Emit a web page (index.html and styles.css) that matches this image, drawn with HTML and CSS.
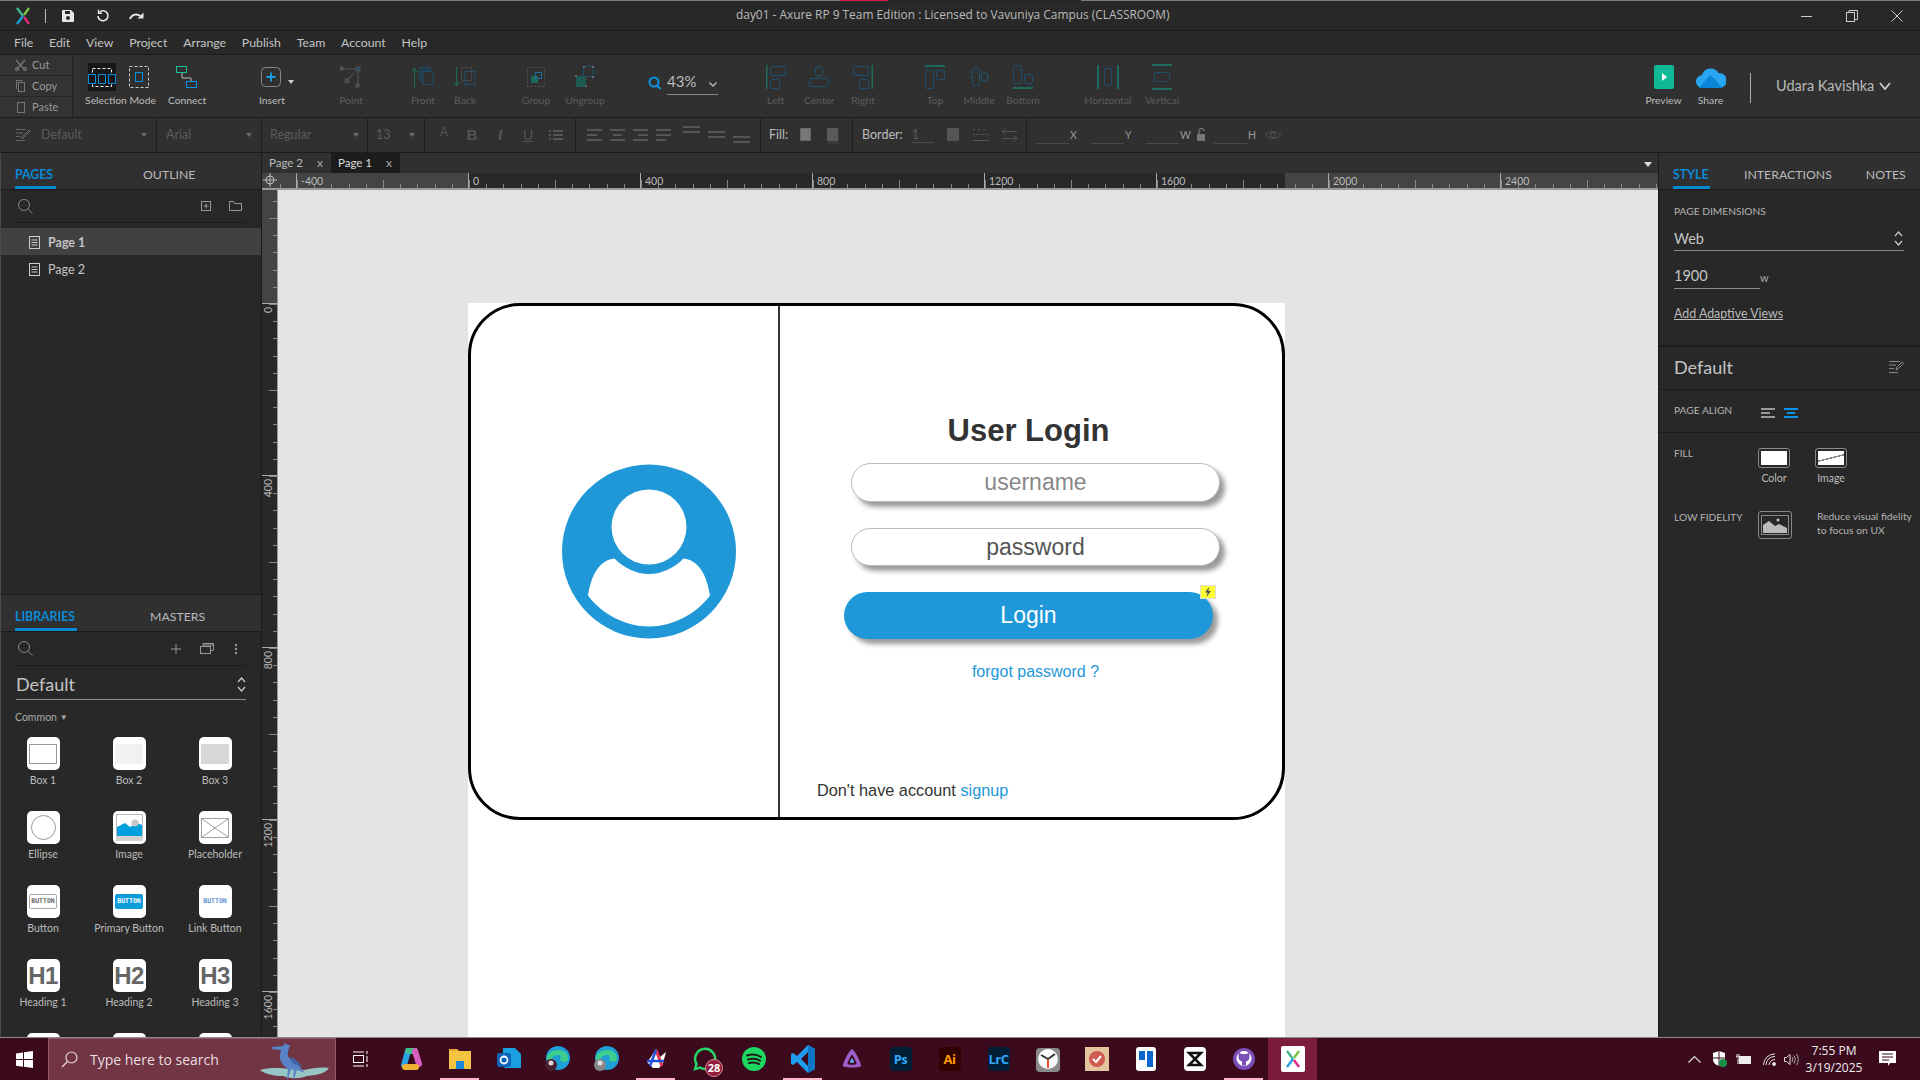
FILE: index.html
```html
<!DOCTYPE html>
<html lang="en">
<head>
<meta charset="utf-8">
<title>day01 - Axure RP 9</title>
<link rel="stylesheet" href="styles.css">
</head>
<body>
<div class="app">
  <div class="strip"><i class="s-a"></i><i class="s-b"></i><i class="s-c"></i><i class="s-d"></i></div>
  <header class="titlebar">
    <div class="tb-left">
      <svg class="logo" width="14" height="18" viewBox="0 0 14 18" fill="none" stroke-width="2.4"><path d="M1 1 L7 9" stroke="#3fb58f"/><path d="M7 9 L1 17" stroke="#1a9fdc"/><path d="M13 1 L8 8" stroke="#7fc241"/><path d="M8 10 L13 17" stroke="#e0287c"/></svg>
      <span class="tb-sep"></span>
      <svg width="14" height="14" viewBox="0 0 14 14"><path d="M1 2a1 1 0 0 1 1-1h8l3 3v8a1 1 0 0 1-1 1H2a1 1 0 0 1-1-1z" fill="#e6e6e6"/><rect x="4" y="2" width="5" height="3" fill="#282828"/><circle cx="7" cy="9" r="2" fill="#282828"/></svg>
      <svg class="ml21" width="14" height="14" viewBox="0 0 14 14" fill="none" stroke="#e6e6e6" stroke-width="1.6"><path d="M3.5 3.2A5 5 0 1 1 2 7"/><path d="M2.5 0.8v3.4h3.4" stroke-width="1.4"/></svg>
      <svg class="ml19" width="16" height="12" viewBox="0 0 16 12" fill="none" stroke="#e6e6e6" stroke-width="2"><path d="M1 9c2-5 7-6 12-2"/><path d="M14.5 2.5v6h-6" fill="#e6e6e6" stroke="none"/></svg>
    </div>
    <div class="tb-title">day01 - Axure RP 9 Team Edition : Licensed to Vavuniya Campus (CLASSROOM)</div>
    <div class="winctl">
      <svg width="12" height="12" viewBox="0 0 12 12" stroke="#ccc" fill="none"><path d="M0 6.5h11"/></svg>
      <svg width="12" height="12" viewBox="0 0 12 12" stroke="#ccc" fill="none"><rect x="0.5" y="2.5" width="8" height="9"/><path d="M3 2.5V.5h8.5v9h-3"/></svg>
      <svg width="12" height="12" viewBox="0 0 12 12" stroke="#ccc" fill="none"><path d="M.5.5l11 11M11.5.5l-11 11"/></svg>
    </div>
  </header>
  <nav class="menubar">
    <span>File</span><span>Edit</span><span>View</span><span>Project</span><span>Arrange</span><span>Publish</span><span>Team</span><span>Account</span><span>Help</span>
  </nav>
  <section class="toolbar">
    <div class="clip">
      <div class="clip-row"><svg width="12" height="12" viewBox="0 0 12 12" fill="none" stroke="#777" stroke-width="1.2"><path d="M1 1l8 9M10 1L2 10"/><circle cx="2" cy="10" r="1.4"/><circle cx="10" cy="10" r="1.4"/></svg><span>Cut</span></div>
      <div class="clip-row"><svg width="12" height="12" viewBox="0 0 12 12" fill="none" stroke="#777"><rect x="3.5" y="2.5" width="6" height="9"/><path d="M1.5 9V.5h6"/></svg><span>Copy</span></div>
      <div class="clip-row"><svg width="12" height="12" viewBox="0 0 12 12" fill="none" stroke="#777"><rect x="2.5" y="1.5" width="7" height="10"/><path d="M4.5 1.5h3"/></svg><span>Paste</span></div>
    </div>
    <div class="tool w81">
      <div class="tool-ic sel-ic">
        <svg class="sel-on" width="28" height="28" viewBox="0 0 28 28" fill="none"><rect width="28" height="28" fill="#171717"/><rect x="4.5" y="5.5" width="19" height="18" stroke="#eee" stroke-dasharray="3 2"/><path d="M.5 11.5h7v9h-7zM10.5 11.5h7v9h-7zM20.5 11.5h7v9h-7z" stroke="#0a93e6" fill="#171717"/></svg>
        <svg width="20" height="24" viewBox="0 0 20 24" fill="none"><rect x=".5" y="1.5" width="19" height="21" stroke="#ccc" stroke-dasharray="3 2"/><rect x="6.5" y="7.5" width="7" height="9" stroke="#0a93e6"/></svg>
      </div>
      <span class="tool-l on">Selection Mode</span>
    </div>
    <div class="tool w52">
      <div class="tool-ic"><svg width="22" height="22" viewBox="0 0 22 22" fill="none"><rect x=".5" y=".5" width="10" height="6" stroke="#19c29a"/><rect x="10.5" y="15.5" width="10" height="6" stroke="#0a93e6"/><path d="M6 7v5h9v3" stroke="#bbb"/></svg></div>
      <span class="tool-l on">Connect</span>
    </div>
    <div class="tool w118">
      <div class="tool-ic"><svg class="ins-ic" width="20" height="24" viewBox="0 0 20 24" fill="none"><rect x=".5" y="2.5" width="19" height="19" rx="4" stroke="#888"/><path d="M10 7.5v9M5.5 12h9" stroke="#1a9fe8" stroke-width="1.8"/></svg><i class="caret ins-caret"></i></div>
      <span class="tool-l on">Insert</span>
    </div>
    <div class="tool w40">
      <div class="tool-ic"><svg width="22" height="24" viewBox="0 0 22 24" fill="none" stroke="#555"><path d="M2 4h16v16" /><rect x="0" y="2" width="3" height="3" fill="#555"/><rect x="16" y="2" width="4" height="4" fill="#1f4d6b"/><rect x="16" y="19" width="3" height="3" fill="#555"/><path d="M14 8L7 15l-1-2-1 5 5-1-2-1" fill="#4a4a4a"/></svg></div>
      <span class="tool-l">Point</span>
    </div>
    <div class="tool w42 ml31">
      <div class="tool-ic"><svg width="22" height="22" viewBox="0 0 22 22" fill="none"><path d="M2.500 21V3M0 6l2.500-4L5 6" stroke="#1c6a5c"/><rect x="8" y="1.500" width="10" height="13" stroke="#1f4d6b" fill="#233c4b"/><rect x="11" y="5.500" width="10" height="13" stroke="#1f4d6b" fill="#303030"/></svg></div>
      <span class="tool-l">Front</span>
    </div>
    <div class="tool w42">
      <div class="tool-ic"><svg width="22" height="22" viewBox="0 0 22 22" fill="none"><path d="M2.500 1v18M0 16l2.500 4L5 16" stroke="#1c6a5c"/><rect x="7.500" y="1.500" width="10" height="13" stroke="#444"/><rect x="11" y="5.500" width="10" height="13" stroke="#1f4d6b"/></svg></div>
      <span class="tool-l">Back</span>
    </div>
    <div class="tool w49 ml25">
      <div class="tool-ic"><svg width="20" height="22" viewBox="0 0 20 22" fill="none"><rect x="1.500" y="1.500" width="17" height="19" stroke="#555" stroke-dasharray="2 2"/><rect x="5" y="10" width="7" height="7" fill="#1c6a5c"/><rect x="9.500" y="6.500" width="6" height="6" stroke="#1f6da0"/></svg></div>
      <span class="tool-l">Group</span>
    </div>
    <div class="tool w49">
      <div class="tool-ic"><svg width="20" height="22" viewBox="0 0 20 22" fill="none"><rect x="8.500" y=".5" width="10" height="10" stroke="#1f4d6b"/><rect x="1" y="10" width="10" height="11" fill="#1c5a52"/><path d="M8 0h2v2H8zM17 0h2v2h-2zM17 10h2v2h-2zM0 9h2v2H0zM10 19h2v2h-2z" fill="#666"/></svg></div>
      <span class="tool-l">Ungroup</span>
    </div>
    <div class="zoomctl">
      <svg width="14" height="16" viewBox="0 0 14 16" fill="none" stroke="#0a93e6" stroke-width="2"><circle cx="6" cy="7" r="4.500"/><path d="M9 10.500l3.500 3.500"/></svg>
      <div class="zoom-field"><span>43%</span><svg width="8" height="5" viewBox="0 0 8 5" fill="none" stroke="#bbb" stroke-width="1.300"><path d="M.5.5L4 4 7.500.5"/></svg></div>
    </div>
    <div class="tool w43 ml36">
      <div class="tool-ic"><svg width="20" height="24" viewBox="0 0 20 24" fill="none"><path d="M.500 0v24" stroke="#1c6a5c" stroke-width="2"/><rect x="4.500" y="1.500" width="15" height="9" rx="1.500" stroke="#1f4d6b"/><rect x="4.500" y="14.500" width="9" height="9" rx="1.500" stroke="#1f4d6b"/></svg></div>
      <span class="tool-l">Left</span>
    </div>
    <div class="tool w43">
      <div class="tool-ic"><svg width="20" height="24" viewBox="0 0 20 24" fill="none" stroke="#1f4d6b"><path d="M10 0v24" stroke="#1c5a52"/><rect x="6.500" y="2.500" width="7" height="8" rx="1.500" fill="#303030"/><rect x=".5" y="13.500" width="19" height="8" rx="1.500" fill="#303030"/></svg></div>
      <span class="tool-l">Center</span>
    </div>
    <div class="tool w44">
      <div class="tool-ic"><svg width="20" height="24" viewBox="0 0 20 24" fill="none"><path d="M19.500 0v24" stroke="#1c6a5c" stroke-width="2"/><rect x=".5" y="1.500" width="15" height="9" rx="1.500" stroke="#1f4d6b"/><rect x="6.500" y="14.500" width="9" height="9" rx="1.500" stroke="#1f4d6b"/></svg></div>
      <span class="tool-l">Right</span>
    </div>
    <div class="tool w44 ml28">
      <div class="tool-ic"><svg width="20" height="24" viewBox="0 0 20 24" fill="none"><path d="M0 1h20" stroke="#1c6a5c" stroke-width="2"/><rect x=".5" y="5.500" width="8" height="18" rx="1.500" stroke="#1f4d6b"/><rect x="11.500" y="5.500" width="8" height="9" rx="1.500" stroke="#1f4d6b"/></svg></div>
      <span class="tool-l">Top</span>
    </div>
    <div class="tool w44">
      <div class="tool-ic"><svg width="20" height="24" viewBox="0 0 20 24" fill="none" stroke="#1f4d6b"><path d="M0 12h20" stroke="#1c5a52"/><rect x="3.500" y="3.500" width="7" height="17" rx="1.500" fill="#303030"/><rect x="12.500" y="7.500" width="6" height="8" rx="1.500" fill="#303030"/></svg></div>
      <span class="tool-l">Middle</span>
    </div>
    <div class="tool w44">
      <div class="tool-ic"><svg width="20" height="24" viewBox="0 0 20 24" fill="none"><path d="M0 23h20" stroke="#1c6a5c" stroke-width="2"/><rect x=".5" y=".5" width="8" height="18" rx="1.500" stroke="#1f4d6b"/><rect x="11.500" y="9.500" width="8" height="9" rx="1.500" stroke="#1f4d6b"/></svg></div>
      <span class="tool-l">Bottom</span>
    </div>
    <div class="tool w54 ml36">
      <div class="tool-ic"><svg width="22" height="24" viewBox="0 0 22 24" fill="none"><path d="M1 0v24M21 0v24" stroke="#1c6a5c" stroke-width="2"/><rect x="7.500" y="3.500" width="7" height="17" rx="1" stroke="#1f4d6b"/></svg></div>
      <span class="tool-l">Horizontal</span>
    </div>
    <div class="tool w54">
      <div class="tool-ic"><svg width="20" height="26" viewBox="0 0 20 26" fill="none"><path d="M0 1h20M0 25h20" stroke="#1c6a5c" stroke-width="2"/><rect x="2.500" y="8.500" width="15" height="9" rx="1" stroke="#1f4d6b"/></svg></div>
      <span class="tool-l">Vertical</span>
    </div>
    <div class="tool w47 push">
      <div class="tool-ic"><svg width="20" height="24" viewBox="0 0 20 24"><rect width="20" height="24" rx="2" fill="#10b995"/><path d="M8 8l5 4-5 4z" fill="#fff"/></svg></div>
      <span class="tool-l on">Preview</span>
    </div>
    <div class="tool w47">
      <div class="tool-ic"><svg width="30" height="24" viewBox="0 0 30 24"><path d="M7 23a6.500 6.500 0 0 1-1-13 9 9 0 0 1 16.500-2A7.500 7.500 0 0 1 24 23z" fill="#28a7f0"/><path d="M3 23L14 10l5 4 7 9z" fill="#0a84d6"/></svg></div>
      <span class="tool-l on">Share</span>
    </div>
    <span class="user-sep"></span>
    <div class="user"><span>Udara Kavishka</span><svg width="12" height="8" viewBox="0 0 12 8" fill="none" stroke="#ccc" stroke-width="1.800"><path d="M1 1l5 6 5-6"/></svg></div>
  </section>
  <section class="formatbar">
    <div class="fsec f1"><svg width="14" height="14" viewBox="0 0 14 14" fill="none" stroke="#666"><path d="M0 1.500h10M0 5h7M0 8.500h5M0 12.500h9M6 11l1-3 6-6 1 1-6 6z"/></svg><span class="dim ml11">Default</span><i class="caret dimc"></i></div>
    <div class="fsec f2"><span class="dim">Arial</span><i class="caret dimc"></i></div>
    <div class="fsec f3"><span class="dim">Regular</span><i class="caret dimc"></i></div>
    <div class="fsec f4"><span class="dim">13</span><i class="caret dimc"></i></div>
    <div class="fsec f5">
      <span class="fmt fa">A</span><span class="fmt fb">B</span><span class="fmt fi">I</span><span class="fmt fu">U</span>
      <span class="fmt"><svg width="14" height="12" viewBox="0 0 14 12" fill="#555"><path d="M0 1h2v2H0zM0 5h2v2H0zM0 9h2v2H0zM4 1h10v2H4zM4 5h10v2H4zM4 9h10v2H4z"/></svg></span>
    </div>
    <div class="fsec f6">
      <svg width="15" height="12" viewBox="0 0 15 12" fill="#555"><path d="M0 0h15v2H0zM0 5h10v2H0zM0 10h15v2H0z"/></svg>
      <svg width="15" height="12" viewBox="0 0 15 12" fill="#555"><path d="M0 0h15v2H0zM3 5h9v2H3zM0 10h15v2H0z"/></svg>
      <svg width="15" height="12" viewBox="0 0 15 12" fill="#555"><path d="M0 0h15v2H0zM5 5h10v2H5zM0 10h15v2H0z"/></svg>
      <svg width="15" height="12" viewBox="0 0 15 12" fill="#555"><path d="M0 0h15v2H0zM0 5h15v2H0zM0 10h10v2H0z"/></svg>
      <svg class="ml6" width="17" height="18" viewBox="0 0 17 18" fill="#555"><path d="M0 0h17v2H0zM0 5h17v2H0z"/></svg>
      <svg width="17" height="18" viewBox="0 0 17 18" fill="#555"><path d="M0 5h17v2H0zM0 10h17v2H0z"/></svg>
      <svg width="17" height="18" viewBox="0 0 17 18" fill="#555"><path d="M0 10h17v2H0zM0 15h17v2H0z"/></svg>
    </div>
    <div class="fsec f7"><span class="lit">Fill:</span><i class="sw sw1"></i><i class="sw sw2"></i></div>
    <div class="fsec f8"><span class="lit">Border:</span><span class="bw">1</span><i class="sw sw3"></i>
      <svg class="ml14" width="16" height="14" viewBox="0 0 16 14" stroke="#555" fill="none"><path d="M0 1.500h3M5 1.500h3M10 1.500h3M0 6.500h16" stroke-dasharray="2 1"/><path d="M0 12.500h16"/></svg>
      <svg class="ml13" width="15" height="14" viewBox="0 0 15 14" stroke="#555" fill="none"><path d="M0 3.500h15M3 .5L0 3.500l3 3M0 10.500h15M12 7.500l3 3-3 3"/></svg>
    </div>
    <div class="fsec f9">
      <i class="fld"></i><span class="fl">X</span><i class="fld"></i><span class="fl">Y</span><i class="fld"></i><span class="fl">W</span>
      <svg class="lock" width="10" height="13" viewBox="0 0 10 13"><rect y="6" width="8" height="7" fill="#777"/><path d="M2 6V3a2.500 2.500 0 0 1 5 0" fill="none" stroke="#777" stroke-width="1.200"/></svg>
      <i class="fld"></i><span class="fl">H</span>
      <svg class="eye" width="16" height="12" viewBox="0 0 16 12" fill="none" stroke="#555"><path d="M.5 6C3 1.500 13 1.500 15.500 6 13 10.500 3 10.500.5 6z"/><circle cx="8" cy="6" r="2.500"/></svg>
    </div>
  </section>
  <main class="main">
    <aside class="leftp">
      <div class="pages">
        <div class="ptabs"><span class="ptab on">PAGES</span><span class="ptab outline">OUTLINE</span></div>
        <div class="srow">
          <svg width="15" height="15" viewBox="0 0 15 15" fill="none" stroke="#888"><circle cx="6" cy="6" r="5.500"/><path d="M10 10l4.500 4.500"/></svg>
          <svg class="push" width="10" height="10" viewBox="0 0 10 10" fill="none" stroke="#999"><rect x=".5" y=".5" width="9" height="9"/><path d="M5 2.500v5M2.500 5h5"/></svg>
          <svg class="ml18" width="13" height="10" viewBox="0 0 13 10" fill="none" stroke="#999"><path d="M.5 9.500V.5h4l1 2h7v7z"/></svg>
        </div>
        <div class="prow sel"><svg width="11" height="13" viewBox="0 0 11 13" fill="none" stroke="#ccc"><rect x=".5" y=".5" width="10" height="12"/><path d="M2.500 4h6M2.500 6.500h6M2.500 9h6"/></svg><b>Page 1</b></div>
        <div class="prow"><svg width="11" height="13" viewBox="0 0 11 13" fill="none" stroke="#ccc"><rect x=".5" y=".5" width="10" height="12"/><path d="M2.500 4h6M2.500 6.500h6M2.500 9h6"/></svg><span>Page 2</span></div>
      </div>
      <div class="libs">
        <div class="ptabs"><span class="ptab on lib">LIBRARIES</span><span class="ptab masters">MASTERS</span></div>
        <div class="srow">
          <svg width="15" height="15" viewBox="0 0 15 15" fill="none" stroke="#888"><circle cx="6" cy="6" r="5.500"/><path d="M10 10l4.500 4.500"/></svg>
          <svg class="push" width="10" height="10" viewBox="0 0 10 10" stroke="#999"><path d="M5 0v10M0 5h10"/></svg>
          <svg class="ml19" width="14" height="11" viewBox="0 0 14 11" fill="none" stroke="#999"><rect x=".5" y="3.500" width="10" height="7"/><path d="M3 3.500v-3h10.500v7H10.500"/><path d="M3 2h10"/></svg>
          <svg class="ml20" width="4" height="12" viewBox="0 0 4 12" fill="#999"><circle cx="2" cy="2" r="1.200"/><circle cx="2" cy="6" r="1.200"/><circle cx="2" cy="10" r="1.200"/></svg>
        </div>
        <div class="libsel"><span>Default</span><svg width="9" height="15" viewBox="0 0 9 15" fill="none" stroke="#ccc" stroke-width="1.200"><path d="M1 5l3.500-4L8 5M1 10l3.500 4L8 10"/></svg></div>
        <div class="common">Common <span class="tri">▼</span></div>
        <div class="libgrid">
          <div class="lib-i"><div class="lic"><i class="lb1"></i></div><span>Box 1</span></div>
          <div class="lib-i"><div class="lic"><i class="lb2"></i></div><span>Box 2</span></div>
          <div class="lib-i"><div class="lic"><i class="lb3"></i></div><span>Box 3</span></div>
          <div class="lib-i"><div class="lic"><i class="lb4"></i></div><span>Ellipse</span></div>
          <div class="lib-i"><div class="lic"><svg width="27" height="27" viewBox="0 0 27 27"><rect x=".5" y=".5" width="26" height="26" fill="#fff" stroke="#bbb"/><rect y="22" width="27" height="5" fill="#d2d2d2"/><path d="M1 22V13l8-4 5 4 7-4 5 2v11z" fill="#00a0e0"/><circle cx="19" cy="9" r="3.500" fill="#c6c6c6"/></svg></div><span>Image</span></div>
          <div class="lib-i"><div class="lic"><svg width="28" height="20" viewBox="0 0 28 20" fill="none" stroke="#a0a0a0"><rect x=".5" y=".5" width="27" height="19"/><path d="M1 1l26 18M27 1L1 19"/></svg></div><span>Placeholder</span></div>
          <div class="lib-i"><div class="lic"><span class="btn-o">BUTTON</span></div><span>Button</span></div>
          <div class="lib-i"><div class="lic"><span class="btn-p">BUTTON</span></div><span>Primary Button</span></div>
          <div class="lib-i"><div class="lic"><span class="btn-l">BUTTON</span></div><span>Link Button</span></div>
          <div class="lib-i"><div class="lic hd">H1</div><span>Heading 1</span></div>
          <div class="lib-i"><div class="lic hd">H2</div><span>Heading 2</span></div>
          <div class="lib-i"><div class="lic hd">H3</div><span>Heading 3</span></div>
          <div class="lib-i"><div class="lic"></div></div>
          <div class="lib-i"><div class="lic"></div></div>
          <div class="lib-i"><div class="lic"></div></div>
        </div>
      </div>
    </aside>
    <div class="center">
      <div class="tabs">
        <div class="tab"><span>Page 2</span><em>x</em></div>
        <div class="tab active"><span>Page 1</span><em>x</em></div>
        <i class="caret tabs-caret"></i>
      </div>
      <div class="hruler-row">
        <div class="corner"><svg width="14" height="14" viewBox="0 0 14 14" fill="none" stroke="#bbb"><circle cx="7" cy="7" r="4"/><path d="M7 0v14M0 7h14"/></svg></div>
        <div class="hruler">
          <div class="hc first"></div>
          <div class="hc"><span>-400</span></div>
          <div class="hc"><span>0</span></div>
          <div class="hc"><span>400</span></div>
          <div class="hc"><span>800</span></div>
          <div class="hc"><span>1200</span></div>
          <div class="hc"><span>1600</span></div>
          <div class="hc"><span>2000</span></div>
          <div class="hc"><span>2400</span></div>
          <div class="hc"></div>
        </div>
      </div>
      <div class="work">
        <div class="vruler">
          <div class="vc first"></div>
          <div class="vc"><span>0</span></div>
          <div class="vc"><span>400</span></div>
          <div class="vc"><span>800</span></div>
          <div class="vc"><span>1200</span></div>
          <div class="vc"><span>1600</span></div>
        </div>
        <div class="canvas">
          <div class="page">
            <div class="card">
              <div class="card-l">
                <svg width="174" height="175" viewBox="0 0 174 175"><circle cx="87" cy="87.500" r="87" fill="#2098d8"/><circle cx="87" cy="63" r="37.500" fill="#fff"/><path d="M26 131.500C29 112 37 96 52.500 94.500 62 104 74 110 87 110s25-6 34.500-15.500C137 96 145 112 148 131.500 134 150 111 162.500 87 162.500S40 150 26 131.500z" fill="#fff"/></svg>
              </div>
              <div class="card-r">
                <h1 class="lg-title">User Login</h1>
                <div class="inp ph">username</div>
                <div class="inp pw">password</div>
                <div class="lg-btn">Login
                  <span class="bolt"><svg width="8" height="10" viewBox="0 0 8 10"><path d="M5 0L1 5.500h2.500L2.500 10 7 4H4.500z" fill="#555"/></svg></span>
                </div>
                <div class="forgot">forgot password ?</div>
                <div class="signup">Don't have account <span>signup</span></div>
              </div>
            </div>
          </div>
        </div>
      </div>
    </div>
    <aside class="rightp">
      <div class="ptabs r-tabs"><span class="ptab on">STYLE</span><span class="ptab">INTERACTIONS</span><span class="ptab">NOTES</span></div>
      <div class="r-dim">
        <div class="cap">PAGE DIMENSIONS</div>
        <div class="rsel"><span>Web</span><svg width="9" height="15" viewBox="0 0 9 15" fill="none" stroke="#ccc" stroke-width="1.200"><path d="M1 5l3.500-4L8 5M1 10l3.500 4L8 10"/></svg></div>
        <div class="rw"><span class="rw-v">1900</span><span class="rw-u">w</span></div>
        <div class="addv">Add Adaptive Views</div>
      </div>
      <div class="r-def"><span>Default</span><svg width="15" height="14" viewBox="0 0 15 14" fill="none" stroke="#888"><path d="M0 1.500h11M0 5h7M0 8.500h5M0 12.500h9M7 10l1-3 5-5 1.500 1.500-5 5z"/></svg></div>
      <div class="r-align"><span class="cap">PAGE ALIGN</span>
        <svg width="14" height="12" viewBox="0 0 14 12" fill="#999"><path d="M0 1h14v2H0zM0 5h9v2H0zM0 9h14v2H0z"/></svg>
        <svg width="14" height="12" viewBox="0 0 14 12" fill="#0a93e6"><path d="M0 1h14v2H0zM3 5h8v2H3zM0 9h14v2H0z"/></svg>
      </div>
      <div class="r-fill"><span class="cap">FILL</span>
        <div class="fillc"><div class="fbox"><i></i></div><span>Color</span></div>
        <div class="fillc fc2"><div class="fbox"><i class="diag"></i></div><span>Image</span></div>
      </div>
      <div class="r-low"><span class="cap">LOW FIDELITY</span>
        <div class="lowbox"><svg width="28" height="20" viewBox="0 0 28 20"><rect x=".5" y=".5" width="27" height="19" fill="none" stroke="#888"/><path d="M2 18v-8l6-4 6 5 4-2 8 4v5z" fill="#bbb"/><circle cx="17" cy="5" r="1.500" fill="#ccc"/></svg></div>
        <div class="lowtxt">Reduce visual fidelity<br>to focus on UX</div>
      </div>
    </aside>
  </main>
  <footer class="taskbar">
    <div class="start"><svg width="17" height="17" viewBox="0 0 17 17" fill="#fff"><path d="M0 2.400L7 1.400v6.700H0zM8 1.200L17 0v8.100H8zM0 9h7v6.700L0 14.700zM8 9h9v8l-9-1.200z"/></svg></div>
    <div class="search">
      <svg width="17" height="17" viewBox="0 0 17 17" fill="none" stroke="#e8d8dc" stroke-width="1.200"><circle cx="10.500" cy="6.500" r="5.500"/><path d="M6.500 10.500L1 16"/></svg>
      <span>Type here to search</span>
      <svg class="heron" width="70" height="38" viewBox="0 0 70 38"><path d="M0 28c10-3 22-2 30-1l14 1c8-2 18-3 25-2-3 4-8 6-14 7l-8 1c-8 3-16 3-24 0C14 34 5 32 0 28z" fill="#98c6c4"/><path d="M12 5l11-1 2-3 3 2 2 0-1 3c-1 4-2 7 0 10 3 2 8 5 11 9l5 6-8-3-3 9h-1l1-9-3-1-3 10h-1l1-10c-6-4-9-9-8-15l1-4-9-1z" fill="#5a82c8"/><path d="M31 15c4 2 9 6 11 10l-8-3c-3-2-4-4-3-7z" fill="#3f62a8"/></svg>
    </div>
    <div class="taskview"><svg width="16" height="16" viewBox="0 0 16 16" fill="none" stroke="#fff"><rect x=".5" y="4.500" width="10" height="7"/><path d="M0 1h11M0 15h11M14 0v3M14 5v6M14 13v3" /></svg></div>
    <div class="tray-apps">
      <div class="ti"><svg width="22" height="24" viewBox="0 0 22 24" fill="none" stroke-width="6" stroke-linecap="round"><path d="M8 4l-4 14" stroke="#2aa6e8"/><path d="M8 4h7" stroke="#3fbf8f"/><path d="M15 4l4 13" stroke="#d65fc0"/><path d="M5 20h11" stroke="#f1b232"/></svg></div>
      <div class="ti run"><svg width="22" height="22" viewBox="0 0 22 22"><path d="M0 1h8l2 2h12v18H0z" fill="#f5c542"/><path d="M0 1h8l2 2H0z" fill="#e7a92e"/><path d="M7 13h8v8H7z" fill="#1e88d8"/></svg></div>
      <div class="ti"><svg width="24" height="24" viewBox="0 0 24 24"><path d="M6 1h12l6 6v14H8l-2-2z" fill="#1aa0e0"/><rect y="6" width="14" height="14" rx="2" fill="#0c64b8"/><circle cx="7" cy="13" r="3.500" fill="none" stroke="#fff" stroke-width="1.800"/></svg></div>
      <div class="ti"><svg width="25" height="26" viewBox="0 0 25 26"><circle cx="13" cy="12" r="12" fill="#1f9fd8"/><path d="M13 4c6 0 10 3 10 8s-4 4-7 3 3-6-3-6-8 6-8 10a8 8 0 0 1-3-7C2 8 7 4 13 4z" fill="#3ecf8e"/><circle cx="6" cy="19" r="6" fill="#4a2030"/><circle cx="6" cy="17" r="2.500" fill="#e6d4d4"/></svg></div>
      <div class="ti"><svg width="25" height="26" viewBox="0 0 25 26"><circle cx="13" cy="12" r="12" fill="#1f9fd8"/><path d="M13 4c6 0 10 3 10 8s-4 4-7 3 3-6-3-6-8 6-8 10a8 8 0 0 1-3-7C2 8 7 4 13 4z" fill="#3ecf8e"/><circle cx="6" cy="19" r="6" fill="#888"/><circle cx="6" cy="17" r="2.500" fill="#ddd"/></svg></div>
      <div class="ti run"><svg width="24" height="24" viewBox="0 0 24 24"><path d="M12 2l4 8 6-5-3 11-4 5H9l-6-6 4-5z" fill="#fff"/><path d="M12 3l6 16" stroke="#e8304a" stroke-width="3"/><path d="M12 3L6 19M3 14h17" stroke="#1f4fd8" stroke-width="2.500" fill="none"/></svg></div>
      <div class="ti wa"><svg width="24" height="24" viewBox="0 0 24 24" fill="none" stroke="#25d366" stroke-width="2.500"><path d="M2 22l1.500-5A10 10 0 1 1 7 20.500z"/></svg><span class="badge">28</span></div>
      <div class="ti"><svg width="24" height="24" viewBox="0 0 24 24"><circle cx="12" cy="12" r="12" fill="#1ed760"/><path d="M5 8.500c5-1.500 10-1 14 1.500M6 12.500c4-1 9-.7 12 1.200M7 16c3-.8 7-.5 10 1" fill="none" stroke="#1a1a1a" stroke-width="2" stroke-linecap="round"/></svg></div>
      <div class="ti run"><svg width="24" height="28" viewBox="0 0 24 28"><path d="M17 0l7 4v20l-7 4L6 17l-4 3-2-1v-10l2-1 4 3z" fill="#1f9cf0"/><path d="M17 7l-7 7 7 7z" fill="#3b0a1c"/><path d="M17 0l7 4v20l-7 4z" fill="#0d76c4"/></svg></div>
      <div class="ti"><svg width="24" height="24" viewBox="0 0 24 24"><path d="M12 2C10 2 2 17 3 19s17 2 18 0S14 2 12 2zm0 6c1 0 5 8 4.500 9s-8.500 1-9 0S11 8 12 8z" fill="#9b5fc8" fill-rule="evenodd"/><path d="M12 11c-.5 0-2.500 4-2 4.500s3.500.5 4 0-1.500-4.500-2-4.500z" fill="#5fa8e8"/></svg></div>
      <div class="ti"><span class="adobe ps">Ps</span></div>
      <div class="ti"><span class="adobe ai">Ai</span></div>
      <div class="ti"><span class="adobe lr">LrC</span></div>
      <div class="ti"><svg width="24" height="26" viewBox="0 0 24 26"><rect y="2" width="24" height="24" rx="4" fill="#8a8a8a"/><circle cx="12" cy="13" r="10" fill="#fff"/><path d="M12 13V22" stroke="#e8502a" stroke-width="2"/><path d="M12 13L5 9M12 13l7-5" stroke="#333" stroke-width="2"/></svg></div>
      <div class="ti"><svg width="24" height="24" viewBox="0 0 24 24"><rect width="24" height="24" fill="#e4c49c"/><circle cx="12" cy="12" r="8" fill="#cf5b52"/><path d="M8 12l3 3 5-6" stroke="#fff" stroke-width="2" fill="none"/></svg></div>
      <div class="ti"><svg width="20" height="24" viewBox="0 0 20 24"><rect width="20" height="24" rx="3" fill="#fff"/><rect x="3" y="4" width="6" height="9" fill="#0c66d0"/><rect x="11" y="4" width="6" height="16" fill="#0c66d0"/></svg></div>
      <div class="ti"><svg width="22" height="24" viewBox="0 0 22 24"><rect width="22" height="24" rx="4" fill="#fff"/><path d="M5 6h12L5 18h12z" fill="none" stroke="#111" stroke-width="2.500"/></svg></div>
      <div class="ti run"><svg width="22" height="24" viewBox="0 0 22 24"><circle cx="11" cy="12" r="11" fill="#7a4fb8"/><circle cx="11" cy="11.500" r="7.500" fill="#fff"/><path d="M5.500 5l3 2h5l3-2v5c0 3-2 4-3.500 4.500v4h-4v-4C7.500 14 5.500 13 5.500 10z" fill="#7a4fb8"/></svg></div>
      <div class="ti act"><svg width="24" height="26" viewBox="0 0 24 26"><rect width="24" height="26" rx="2" fill="#fff"/><path d="M6 5l6 8" stroke="#3fb58f" stroke-width="2.400"/><path d="M12 13l-6 8" stroke="#1a9fdc" stroke-width="2.400"/><path d="M18 5l-5 7" stroke="#7fc241" stroke-width="2.400"/><path d="M13 14l5 7" stroke="#e0287c" stroke-width="2.400"/></svg></div>
    </div>
    <div class="sys">
      <svg width="13" height="8" viewBox="0 0 13 8" fill="none" stroke="#ddd" stroke-width="1.200"><path d="M.5 7.500l6-6 6 6"/></svg>
      <svg class="ml11" width="15" height="16" viewBox="0 0 15 16"><path d="M1 2l6-2 6 2v6c0 4-3 6-6 7-3-1-6-3-6-7z" fill="#fff"/><path d="M7 0v15M1 7h12" stroke="#3b0a1c"/><circle cx="11" cy="12" r="4" fill="#1a8f4a"/></svg>
      <svg class="ml9" width="15" height="12" viewBox="0 0 15 12" fill="none" stroke="#eee"><rect x="3.500" y="3.500" width="11" height="7" fill="#eee"/><path d="M1 1v3M3 1v3M0 4h4v2H2v5"/></svg>
      <svg class="ml12" width="13" height="13" viewBox="0 0 13 13" fill="none" stroke="#ddd"><path d="M.5 12A11 11 0 0 1 12 1M3 12a8.500 8.500 0 0 1 9-8.500M6 12a6 6 0 0 1 6-5.500"/><circle cx="11" cy="11" r="1.500" fill="#ddd"/></svg>
      <svg class="ml8" width="15" height="13" viewBox="0 0 15 13" fill="none" stroke="#ddd"><path d="M.5 4.500h2L6 1.500v10l-3.500-3h-2z"/><path d="M8 4a4 4 0 0 1 0 5M10 2.500a7 7 0 0 1 0 8M12.500 1a10 10 0 0 1 0 11" stroke="#aaa"/></svg>
      <div class="clock"><span>7:55 PM</span><span>3/19/2025</span></div>
      <svg class="notif" width="17" height="16" viewBox="0 0 17 16"><path d="M0 0h17v12h-6l-2 3v-3H0z" fill="#fff"/><path d="M3 3h11M3 6h11M3 9h7" stroke="#3b0a1c"/></svg>
    </div>
  </footer>
</div>
</body>
</html>
```

FILE: styles.css
```css
*{box-sizing:border-box}
html,body{margin:0;padding:0;height:100%;overflow:hidden}
body{font-family:Lato,"Open Sans",sans-serif;color:#bbb;background:#282828}
svg{display:block;flex:none}
i,em{font-style:normal}
.app{width:1920px;height:1080px;display:flex;flex-direction:column;overflow:hidden}
.strip{height:1px;display:flex;flex:none}
.strip i{display:block;height:1px}
.s-a{width:840px;background:#7a7a7a}
.s-b{width:48px;background:#d81b47}
.s-c{width:193px;background:#222}
.s-d{flex:1;background:#7a7a7a}
.titlebar{height:30px;flex:none;display:flex;align-items:center;background:#282828;border-bottom:1px solid #1b1b1b}
.tb-left{width:736px;display:flex;align-items:center;padding-left:16px;flex:none}
.tb-sep{width:1px;height:14px;background:#bbb;margin:0 15px 0 15px}
.ml21{margin-left:21px}
.ml19{margin-left:19px}
.tb-title{font-family:"Open Sans",sans-serif;font-size:11.900px;color:#bbb;white-space:nowrap;padding-bottom:3px}
.winctl{margin-left:auto;display:flex;gap:33px;padding-right:17px}
.menubar{height:24px;flex:none;display:flex;align-items:center;gap:15.800px;padding:0 0 1px 14px;font-size:12.300px;background:#282828;border-bottom:1px solid #1b1b1b;color:#c4c4c4}
.toolbar{height:63px;flex:none;display:flex;background:#303030;border-bottom:1px solid #1b1b1b;padding-right:29px}
.clip{width:73px;flex:none;border-right:1px solid #222;margin-right:7px;display:flex;flex-direction:column}
.clip-row{flex:1;display:flex;align-items:center;gap:5px;padding-left:15px;padding-bottom:1px;font-size:11px;color:#999;background:#333;border-bottom:1px solid #262626}
.clip-row:last-child{border-bottom:0}
.tool{flex:none;display:flex;flex-direction:column;align-items:center;padding-top:8px}
.tool-ic{height:28px;display:flex;align-items:center;justify-content:center;position:relative}
.tool-l{margin-top:2px;font-size:10.300px;line-height:14px;color:#5c5c5c;white-space:nowrap}
.tool-l.on{color:#bdbdbd}
.w81{width:81px}.w52{width:52px}.w118{width:118px}.w40{width:40px}.w42{width:42px}.w49{width:49px}.w43{width:43.500px}.w44{width:44px}.w54{width:54px}.w47{width:47px}
.ml31{margin-left:31px}.ml25{margin-left:25.500px}.ml36{margin-left:36px}.ml28{margin-left:28px}
.ml6{margin-left:4px}.ml8{margin-left:8px}.ml9{margin-left:9px}.ml11{margin-left:11px}.ml12{margin-left:12px}.ml13{margin-left:13px}.ml14{margin-left:14px}.ml18{margin-left:18px}.ml20{margin-left:20px}
.push{margin-left:auto}
.sel-ic{gap:13px;align-self:flex-start;padding-left:8px;justify-content:flex-start}
.caret{display:block;width:0;height:0;border-left:3.500px solid transparent;border-right:3.500px solid transparent;border-top:4px solid #ccc;flex:none}
.ins-ic{margin:0 5px 0 2px}
.ins-caret{position:absolute;left:29px;top:17px}
.zoomctl{width:70px;margin-left:38.500px;display:flex;align-items:center;flex:none;gap:5px;padding-bottom:6px}
.zoom-field{flex:1;height:24px;display:flex;align-items:center;justify-content:space-between;border-bottom:1px solid #888;font-size:15px;line-height:20px;color:#bbb;padding:0 1px 3px 0}
.zoom-field svg{margin-top:6px}
.user-sep{width:1px;height:30px;background:#aaa;margin:18px 25px 0 16px;flex:none}
.user{width:115px;display:flex;align-items:center;justify-content:space-between;font-size:14.500px;color:#bbb;padding:0 0 1px 0}
.formatbar{height:35px;flex:none;display:flex;background:#303030;border-bottom:1px solid #1b1b1b;font-size:12.500px}
.fsec{display:flex;align-items:center;border-right:1px solid #1f1f1f;flex:none;height:34px;padding-bottom:1px}
.dim{color:#5c5c5c}
.dimc{border-top-color:#6a6a6a;margin-left:auto}
.lit{color:#bdbdbd}
.f1{width:157px;padding-right:9px;padding-left:16px}
.f2{width:105px;padding-right:9px;padding-left:9px}
.f3{width:106px;padding-right:8px;padding-left:8px}
.f4{width:57px;padding-right:9px;padding-left:8px}
.f5{width:151px;padding-left:5px}
.fmt{width:28px;display:flex;justify-content:center;color:#555;font-family:"Liberation Sans",sans-serif}
.fa{font-size:12px;margin-top:-6px}
.fb{font-size:15px;font-weight:700}
.fi{font-size:15px;font-weight:700;font-style:italic}
.fu{font-size:14px;text-decoration:underline}
.f6{width:185px;padding-left:11px;gap:8px}
.f7{width:92px;padding-left:8px}
.sw{display:block;height:13px;flex:none}
.sw1{width:11px;background:#777;margin-left:12px;border:1px solid #666}
.sw2{width:11px;background:#5a5a5a;margin-left:16px;box-shadow:1px 3px 0 #3a3a3a}
.f8{width:174px;padding-left:9px}
.bw{width:22px;margin-left:9px;border-bottom:1px solid #4a4a4a;color:#5c5c5c;line-height:15px}
.sw3{width:12px;background:#555;margin-left:13px}
.f9{flex:1;border-right:0;padding-left:9px}
.fld{display:block;width:33px;height:1px;background:#4a4a4a;margin-top:18px;flex:none}
.fl{width:22px;padding-left:1px;font-size:10.500px;color:#999}
.lock{margin:0 7px 0 -4px}
.eye{margin-left:-4px}
.main{height:885px;flex:none;display:flex;border-bottom:1px solid #8a8a8a}
.leftp{width:262px;flex:none;display:flex;flex-direction:column;background:#282828;border-right:1px solid #1b1b1b;border-left:1px solid #4a4a4a}
.pages{height:441px;flex:none}
.ptabs{height:37px;display:flex;background:#303030;border-bottom:1px solid #1b1b1b}
.ptab{height:36px;line-height:44px;font-size:12.300px;color:#bbb;white-space:nowrap}
.ptab.on{color:#0b8ad8;font-weight:700;border-bottom:3px solid #0788d3;box-sizing:border-box}
.leftp .ptab.on{margin-left:14px;width:41px;letter-spacing:0}
.outline{margin-left:87px}
.leftp .ptab.lib{width:62px}
.masters{margin-left:73px}
.srow{height:34px;margin:0 15px;padding:0 8px 0 2px;display:flex;align-items:center;border-bottom:1px solid #1c1c1c}
.pages .srow{height:33px;padding-right:4px}
.prow{height:27px;display:flex;align-items:center;gap:8px;padding:1px 0 0 28px;font-size:12.500px;color:#c4c4c4}
.prow.sel{background:#414141;margin-top:5px}
.libs{flex:1;overflow:hidden;border-top:1px solid #1b1b1b;min-height:0}
.libsel{height:34px;margin:0 15px;display:flex;align-items:center;justify-content:space-between;font-size:18px;color:#c4c4c4;border-bottom:1px solid #8a8a8a;padding-top:3px}
.common{font-size:10.500px;color:#aaa;padding-left:14px;height:37px;line-height:34px}
.tri{font-size:8px;vertical-align:1px}
.libgrid{display:grid;grid-template-columns:repeat(3,86px);grid-auto-rows:74px;margin-left:-1px}
.lib-i{display:flex;flex-direction:column;align-items:center;font-size:10.500px;color:#bbb;white-space:nowrap}
.lib-i>span{margin-top:3px;line-height:14px}
.lic{width:33px;height:33px;background:#fff;border-radius:5px;display:flex;align-items:center;justify-content:center;flex:none}
.lb1,.lb2,.lb3{display:block;width:28px;height:20px}
.lb1{border:1px solid #999}
.lb2{background:#f1f1f1}
.lb3{background:#d7d7d7}
.lb4{display:block;width:25px;height:25px;border-radius:50%;border:1px solid #999}
.btn-o,.btn-p,.btn-l{font:700 6.500px/15px "DejaVu Sans Mono","Liberation Mono",monospace;width:28px;height:15px;text-align:center;border-radius:2px;overflow:hidden}
.btn-o{border:1px solid #aaa;color:#666;line-height:13px}
.btn-p{background:#0d9ddb;color:#fff}
.btn-l{color:#5b8fd6}
.hd{font:700 24px/33px "Liberation Sans",sans-serif;color:#666;letter-spacing:-.5px}
.center{flex:1;min-width:0;display:flex;flex-direction:column}
.tabs{height:20px;flex:none;display:flex;background:#303030;align-items:stretch;padding-right:6px}
.tab{width:69px;display:flex;align-items:center;justify-content:space-between;padding:0 8px 2px 7px;font-size:11.500px;color:#bbb}
.tab em{font-size:12px;color:#aaa}
.tab.active{background:#1c1c1c;color:#ddd}
.tabs-caret{margin:9px 0 0 auto;border-left-width:4px;border-right-width:4px;border-top-width:5px;border-top-color:#ddd}
.hruler-row{height:17px;flex:none;display:flex;border-bottom:2px solid #9a9a9a}
.corner{width:16px;flex:none;background:#444;display:flex;align-items:center;justify-content:center;padding-bottom:1px}
.hruler{flex:1;display:flex;overflow:hidden;background:linear-gradient(90deg,#444 0 190px,#282828 190px 1007px,#444 1007px)}
.hc{flex:none;width:172px;border-left:1px solid #aaa;font-size:10.500px;line-height:17px;color:#bbb;padding-left:4px;background:repeating-linear-gradient(90deg,#888 0 1px,transparent 1px 86px) left bottom/100% 8px no-repeat,repeating-linear-gradient(90deg,#888 0 1px,transparent 1px 17.200px) left bottom/100% 4px no-repeat}
.hc.first{margin-left:-154px}
.work{flex:1;display:flex;min-height:0}
.vruler{width:16px;flex:none;overflow:hidden;background:linear-gradient(180deg,#444 0 113px,#282828 113px);border-right:1px solid #9a9a9a}
.vc{height:172px;width:15px;border-top:1px solid #aaa;position:relative;background:repeating-linear-gradient(180deg,#888 0 1px,transparent 1px 86px) right top/8px 100% no-repeat,repeating-linear-gradient(180deg,#888 0 1px,transparent 1px 17.200px) right top/4px 100% no-repeat}
.vc.first{margin-top:-59px}
.vc span{display:block;font-size:10.500px;line-height:13px;color:#bbb;writing-mode:vertical-rl;transform:rotate(180deg);width:13px;padding-bottom:3px;margin-top:0}
.canvas{flex:1;background:#e4e4e4;padding:113px 0 0 190px;overflow:hidden}
.page{width:817px;height:735px;background:#fff}
.card{width:817px;height:517px;border:3px solid #000;border-radius:52px;display:flex;font-family:"Liberation Sans",Arial,sans-serif}
.card-l{width:307px;flex:none;padding:158px 0 0 91px}
.card-r{flex:1;border-left:2px solid #333;padding:107px 0 0 64px}
.lg-title{margin:0;width:369px;height:36px;font-size:31px;line-height:36px;font-weight:700;color:#333;text-align:center}
.inp{margin:14px 0 0 7px;width:369px;height:39px;border:1px solid #bbb;border-radius:20px;box-shadow:5px 5px 5px rgba(0,0,0,.4);font-size:23px;line-height:36px;text-align:center;background:#fff}
.ph{color:#888}
.pw{color:#555;margin-top:26px;height:38px}
.lg-btn{position:relative;margin-top:26px;width:369px;height:47px;border-radius:24px;background:#1e98d8;color:#fff;font-size:23px;line-height:47px;text-align:center;box-shadow:5px 5px 5px rgba(0,0,0,.4)}
.bolt{position:absolute;right:-3px;top:-7px;width:16px;height:14px;background:#ffff33;border:1px solid #ddd;display:flex;align-items:center;justify-content:center}
.forgot{margin:23px 0 0 7px;width:369px;height:20px;line-height:20px;font-size:16px;color:#1e98d8;text-align:center}
.signup{margin:98px 0 0 -27px;height:20px;line-height:20px;font-size:16.300px;color:#333;white-space:nowrap}
.signup span{color:#1e98d8}
.rightp{width:262px;flex:none;background:#282828;border-left:1px solid #1b1b1b}
.r-tabs{padding-left:14px}
.rightp .ptab:nth-child(2){margin-left:34px}
.rightp .ptab:nth-child(3){margin-left:34px}
.rightp .ptab.on{width:37px}
.cap{font-size:10.200px;color:#b4b4b4;line-height:14px;white-space:nowrap}
.r-dim{height:157px;padding:14px 16px 0 15px;border-bottom:2px solid #1c1c1c}
.rsel{margin-top:8px;height:25px;display:flex;align-items:center;justify-content:space-between;border-bottom:1px solid #8a8a8a;font-size:14.500px;color:#c4c4c4;padding-right:1px}
.rw{margin-top:12px;display:flex;align-items:flex-end}
.rw-v{width:86px;height:26px;line-height:26px;font-size:14.500px;color:#c4c4c4;border-bottom:1px solid #8a8a8a}
.rw-u{font-size:11px;color:#aaa;margin:3px 0 0;align-self:center}
.addv{margin-top:17px;font-size:12.400px;color:#bbb;text-decoration:underline;line-height:16px}
.r-def{height:43px;display:flex;align-items:center;justify-content:space-between;padding:0 16px 2px 15px;font-size:18px;color:#c4c4c4;border-bottom:1px solid #1c1c1c}
.r-align{height:43px;display:flex;align-items:center;padding-left:15px;border-bottom:1px solid #1c1c1c;gap:9px}
.r-align svg{margin-top:3px}
.r-align .cap{width:78px;margin-top:-3px}
.r-fill{height:76px;display:flex;padding:13px 0 0 15px}
.r-fill .cap{width:84px}
.fillc{display:flex;flex-direction:column;align-items:center;width:32px;font-size:10.500px;color:#bbb;line-height:14px}
.fc2{margin-left:25px}
.fbox{width:32px;height:20px;border:1px solid #888;border-radius:3px;padding:2px;margin-top:2px;margin-bottom:3px}
.fbox i{display:block;height:100%;background:#fff}
.fbox i.diag{background:linear-gradient(-14deg,#fff 0 46%,#888 46% 54%,#fff 54%)}
.r-low{display:flex;padding-left:15px}
.r-low .cap{width:84px;margin-top:1px}
.lowbox{width:34px;height:28px;border:1px solid #888;border-radius:3px;display:flex;align-items:center;justify-content:center;margin-top:2px}
.lowtxt{font-size:10.300px;line-height:14px;color:#b4b4b4;margin-left:25px;white-space:nowrap}
.taskbar{flex:1;display:flex;align-items:stretch;background:#3c0a1d;min-height:0}
.start{width:48px;flex:none;display:flex;align-items:center;justify-content:center}
.search{width:288px;flex:none;display:flex;align-items:center;gap:12px;padding-left:12px;background:#713543;border:1px solid #8e5a66;border-bottom:0;position:relative;font-family:"Open Sans",sans-serif;font-size:14px;color:#eadfe1;overflow:hidden}
.heron{position:absolute;right:5px;bottom:0}
.taskview{width:50px;flex:none;display:flex;align-items:center;justify-content:center;margin-left:-1px;padding-left:2px}
.tray-apps{display:flex;flex:none;margin-left:1px}
.ti{width:49px;flex:none;display:flex;align-items:center;justify-content:center;position:relative}
.ti.run::after{content:"";position:absolute;left:5px;right:5px;bottom:0;height:2px;background:#ffb6c8}
.ti.act{background:#7a1c3a;margin-left:0}
.wa .badge{position:absolute;left:25px;bottom:3px;width:18px;height:18px;border-radius:50%;background:#8f1d3d;border:1px solid #d88;color:#fff;font:700 11px/16px "Open Sans",sans-serif;text-align:center}
.adobe{width:22px;height:24px;border-radius:4px;font:700 13px/24px "Open Sans",sans-serif;text-align:center;letter-spacing:-.5px}
.ps{background:#001e36;color:#31a8ff}
.ai{background:#330000;color:#ff9a00}
.lr{background:#001e36;color:#31a8ff}
.sys{margin-left:auto;display:flex;align-items:center;padding-right:24px}
.clock{width:70px;display:flex;flex-direction:column;align-items:center;font-family:"Open Sans",sans-serif;font-size:12px;line-height:17px;color:#eee}
.notif{margin-left:10px}
```
